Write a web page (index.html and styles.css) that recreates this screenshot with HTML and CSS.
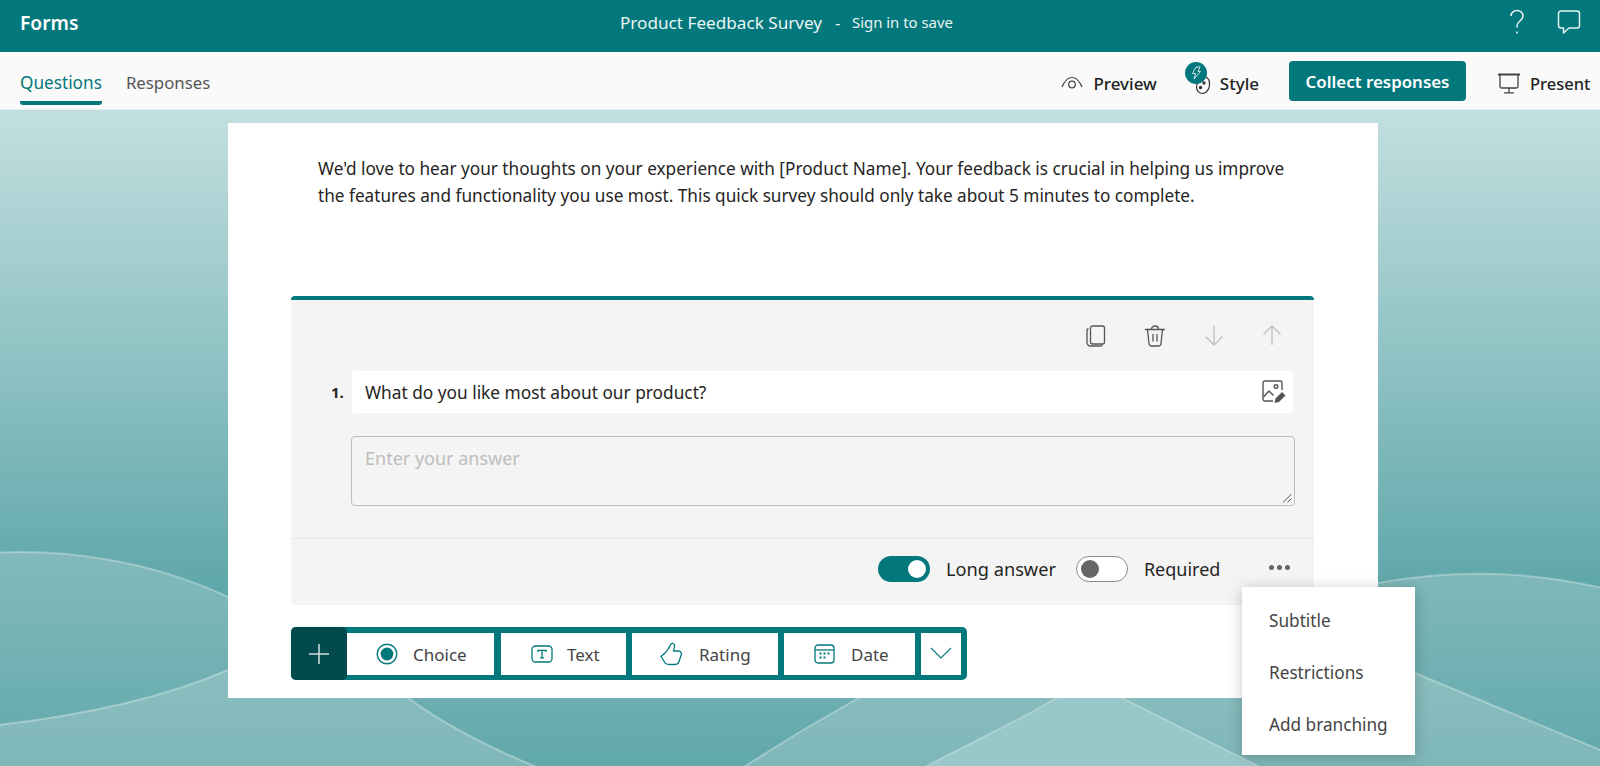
FILE: index.html
```html
<!DOCTYPE html>
<html lang="en">
<head>
<meta charset="utf-8">
<title>Product Feedback Survey</title>
<link rel="stylesheet" href="styles.css">
</head>
<body>
<header class="topbar">
  <div class="brand">Forms</div>
  <div class="doc-title"><span class="doc-name">Product Feedback Survey</span><span class="doc-sep">-</span><span class="doc-save">Sign in to save</span></div>
  <div class="top-icons">
    <svg class="help" width="16" height="26" viewBox="0 0 16 26" fill="none" stroke="#e6f2f2" stroke-width="1.5"><path d="M2 7c0-3 2.500-5.500 6-5.500s6 2.500 6 5.500c0 4.500-6 5-6 10v1.500"/><circle cx="8" cy="23.500" r="1" fill="#e6f2f2" stroke="none"/></svg>
    <svg width="24" height="26" viewBox="0 0 24 26" fill="none" stroke="#e6f2f2" stroke-width="1.500" stroke-linejoin="round"><path d="M4 2h16a2.500 2.500 0 0 1 2.500 2.500v12a2.500 2.500 0 0 1-2.500 2.500h-8l-5.500 5v-5h-2.500a2.500 2.500 0 0 1-2.500-2.500v-12a2.500 2.500 0 0 1 2.500-2.500z"/></svg>
  </div>
</header>
<nav class="subbar">
  <div class="tabs">
    <div class="tab tab-active">Questions</div>
    <div class="tab tab-plain">Responses</div>
  </div>
  <div class="subactions">
    <div class="action act-preview">
      <svg width="22" height="14" viewBox="0 0 22 14" fill="none" stroke="#444" stroke-width="1.200"><path d="M1 11C4 4 7.500 1.500 11 1.500S18 4 21 11"/><circle cx="11" cy="8.500" r="3.300"/></svg>
      <span>Preview</span>
    </div>
    <div class="action act-style">
      <span class="style-icon">
        <svg class="palette" width="16" height="20" viewBox="0 0 16 20" fill="#fafafa" stroke="#333" stroke-width="1.200"><path d="M10 1.500c3.500 1.500 5 5 4.500 9-.6 4.500-3.500 8-7 8s-6-3-6-6.500 3.500-9 8.500-10.500z"/><circle cx="9" cy="8" r="1.100" fill="#333"/><circle cx="5.500" cy="12.500" r="1.100" fill="#333"/></svg>
        <span class="badge"><svg width="12" height="14" viewBox="0 0 12 14" fill="none" stroke="#cfe6e6" stroke-width="1"><path d="M6 1h4L8 5.500h2.500L4 13l1.500-5.500H2.500z"/></svg></span>
      </span>
      <span>Style</span>
    </div>
    <button class="collect">Collect responses</button>
    <div class="action act-present">
      <svg width="24" height="21" viewBox="0 0 24 21" fill="none" stroke="#444" stroke-width="1.300"><path d="M1 1.500h22" stroke-width="2"/><path d="M3 2v11.500a1.500 1.500 0 0 0 1.500 1.500h15a1.500 1.500 0 0 0 1.500-1.500V2M12 15v4.500M7 19.800h10"/></svg>
      <span>Present</span>
    </div>
  </div>
</nav>
<main class="stage">
  <svg class="backdrop" viewBox="0 110 1600 656" preserveAspectRatio="none" aria-hidden="true">
    <defs>
      <linearGradient id="waveFill" gradientUnits="userSpaceOnUse" x1="0" y1="550" x2="0" y2="760"><stop offset="0" stop-color="#84babc"/><stop offset="1" stop-color="#62a9ac"/></linearGradient>
      <linearGradient id="hillFill" gradientUnits="userSpaceOnUse" x1="0" y1="650" x2="0" y2="766"><stop offset="0" stop-color="#8dbfc0"/><stop offset="1" stop-color="#7fb7b9"/></linearGradient>
    </defs>
    <path class="wave" d="M-10 553C60 548 150 560 228 597C500 720 1100 640 1378 583C1450 570 1530 570 1610 590V780H-10Z"/>
    <path class="hill" d="M-10 726C90 715 170 695 228 670C290 645 350 650 407 697C440 722 490 748 539 768V780H-10Z"/>
    <path class="hill" d="M742 768L798 733L860 697C950 600 1200 560 1415 673L1610 754V780H742Z"/>
    <path class="peak" d="M923 768C980 738 1020 720 1058 697L1090 678L1120 697C1160 717 1210 742 1262 768V780H923Z"/>
  </svg>
  <section class="sheet">
    <p class="intro">We'd love to hear your thoughts on your experience with [Product Name]. Your feedback is crucial in helping us improve the features and functionality you use most. This quick survey should only take about 5 minutes to complete.</p>
    <div class="qcard">
      <div class="qtools">
        <svg width="20" height="22" viewBox="0 0 20 22" fill="none" stroke="#555" stroke-width="1.300"><rect x="4.500" y="1" width="14" height="18" rx="2"/><path d="M2.500 3.500A2 2 0 0 0 1 5.500v12A3.500 3.500 0 0 0 4.500 21h10a2 2 0 0 0 1.800-1.300"/></svg>
        <svg width="22" height="22" viewBox="0 0 22 22" fill="none" stroke="#555" stroke-width="1.300"><path d="M1 4.500h20M7.500 4.500C7.500 2.500 9 1 11 1s3.500 1.500 3.500 3.500M3.500 4.500l1.500 14a2.500 2.500 0 0 0 2.500 2.500h7a2.500 2.500 0 0 0 2.500-2.500l1.500-14M9 9v7.500M13 9v7.500"/></svg>
        <svg class="arrow" width="20" height="21" viewBox="0 0 20 21" fill="none" stroke="#c4c4c4" stroke-width="1.500"><path d="M10 1v19M1.500 11.500l8.500 8.500 8.500-8.500"/></svg>
        <svg class="arrow" width="20" height="21" viewBox="0 0 20 21" fill="none" stroke="#c4c4c4" stroke-width="1.500"><path d="M10 20V1M1.500 9.500L10 1l8.500 8.500"/></svg>
      </div>
      <div class="qrow">
        <span class="qnum">1.</span>
        <div class="qtitle">
          <span>What do you like most about our product?</span>
          <svg width="24" height="24" viewBox="0 0 24 24" fill="none" stroke="#555" stroke-width="1.400"><path d="M11 21H3a2 2 0 0 1-2-2V3a2 2 0 0 1 2-2h15a2 2 0 0 1 2 2v7"/><path d="M1.500 17L7 11l4.500 4.500"/><circle cx="14" cy="6.500" r="1.800"/><path d="M12.500 23l1-4.500 6.500-6.500 3.500 3.500-6.500 6.500z" fill="#555" stroke="none"/></svg>
        </div>
      </div>
      <div class="answer">
        <span>Enter your answer</span>
        <svg class="grip" width="10" height="10" viewBox="0 0 10 10" stroke="#555" stroke-width="1"><path d="M1 9.500L9.500 1M5.500 9.500L9.500 5.500"/></svg>
      </div>
      <div class="qfoot">
        <span class="switch switch-on"><i></i></span>
        <span class="switch-label label-long">Long answer</span>
        <span class="switch switch-off"><i></i></span>
        <span class="switch-label label-req">Required</span>
        <span class="dots"><i></i><i></i><i></i></span>
      </div>
    </div>
    <div class="addbar">
      <div class="add-plus"><svg width="22" height="22" viewBox="0 0 22 22" stroke="#d5dfdf" stroke-width="1.500"><path d="M11 1v20M1 11h20"/></svg></div>
      <div class="add-item item-choice">
        <svg width="22" height="22" viewBox="0 0 22 22"><circle cx="11" cy="11" r="9.800" fill="none" stroke="#03787c" stroke-width="1.400"/><circle cx="11" cy="11" r="6.400" fill="#03787c"/></svg>
        <span>Choice</span>
      </div>
      <div class="add-item item-text">
        <svg width="22" height="18" viewBox="0 0 22 18" fill="none" stroke="#03787c" stroke-width="1.300"><rect x="1" y="1" width="20" height="16" rx="3.500"/><path d="M7 7V5.300h8V7M11 5.300v7.500M9 12.800h4"/></svg>
        <span>Text</span>
      </div>
      <div class="add-item item-rating">
        <svg width="23" height="24" viewBox="0 0 23 24" fill="none" stroke="#03787c" stroke-width="1.300" stroke-linejoin="round"><path d="M1 14.500L5 11C7 9 8 7 9.500 5L10.500 2.500C11 .8 14 .8 14.500 3C15 5 13.500 8 13.500 9H18.500C21 9 22 11.500 21 13.500L19 19.500C18.300 21.500 17 22.500 15 22.500H9.500C8 22.500 6.500 22 5.500 21.500Z"/></svg>
        <span>Rating</span>
      </div>
      <div class="add-item item-date">
        <svg width="21" height="20" viewBox="0 0 21 20" fill="none" stroke="#03787c" stroke-width="1.300"><rect x="1" y="1" width="19" height="18" rx="3"/><path d="M1 6h19"/><path d="M5.500 9.500h2M9.500 9.500h2M13.500 9.500h2M5.500 13.500h2M9.500 13.500h2" stroke-width="2"/></svg>
        <span>Date</span>
      </div>
      <div class="add-more"><svg width="22" height="12" viewBox="0 0 22 12" fill="none" stroke="#03787c" stroke-width="1.100"><path d="M1 1l10 10L21 1"/></svg></div>
    </div>
  </section>
  <div class="popup">
    <div class="popup-item">Subtitle</div>
    <div class="popup-item">Restrictions</div>
    <div class="popup-item">Add branching</div>
  </div>
</main>
</body>
</html>
```
FILE: styles.css
```css
* { box-sizing: border-box; }
html, body { margin: 0; height: 766px; overflow: hidden; }
body { display: flex; flex-direction: column; width: 1600px; font-family: "Noto Sans", "Open Sans", sans-serif; color: #252423; }

.topbar { height: 52px; background: #03787c; color: #fff; display: flex; align-items: center; padding: 0 19px 0 20px; position: relative; flex: none; }
.brand { font-size: 19.2px; font-weight: 600; width: 600px; margin-top: -8px; }
.doc-title { display: flex; align-items: center; font-size: 17.15px; color: #eaf4f4; margin-top: -8px; }
.doc-name { width: 215px; }
.doc-sep { width: 17px; }
.doc-save { font-size: 14.9px; }
.top-icons { margin-left: auto; display: flex; align-items: center; gap: 32px; margin-top: -8px; }

.subbar { height: 58px; background: #fafafa; display: flex; justify-content: space-between; padding-left: 20px; flex: none; border-bottom: 1px solid #e4eeee; }
.tabs { display: flex; gap: 24px; }
.tab { height: 53px; padding-top: 19px; color: #555; }
.tab-active { font-size: 17.2px; color: #03787c; border-bottom: 4px solid #03787c; border-radius: 0 0 3px 3px; }
.tab-plain { font-size: 16.8px; }
.subactions { display: flex; align-items: flex-start; white-space: nowrap; font-size: 17px; }
.action { display: flex; align-items: center; height: 58px; color: #222; font-weight: 500; padding-top: 4px; }
.act-preview { gap: 10px; margin-right: 28px; }
.act-style { gap: 13px; margin-right: 30px; }
.act-present { gap: 9px; margin-left: 31px; width: 103px; font-size: 16.5px; }
.style-icon { position: relative; display: block; width: 22px; height: 24px; }
.palette { position: absolute; left: 10px; top: 4px; }
.badge { position: absolute; left: 0; top: -9px; width: 22px; height: 22px; border-radius: 50%; background: #03787c; display: flex; align-items: center; justify-content: center; }
.collect { margin-top: 9px; width: 177px; height: 40px; border: 0; border-radius: 4px; background: #03787c; color: #fff; font: 600 16.9px "Noto Sans", sans-serif; padding: 1px 0 0; }

.stage { position: relative; flex: 1; background: linear-gradient(180deg, #c3dfe0 0, #5fa7aa 480px); padding: 13px 0 0 228px; }
.backdrop { position: absolute; inset: 0; width: 100%; height: 100%; }
.wave { fill: url(#waveFill); stroke: rgba(255,255,255,.3); stroke-width: 2; }
.hill { fill: url(#hillFill); stroke: rgba(255,255,255,.3); stroke-width: 2; }
.peak { fill: #9ac8ca; stroke: rgba(255,255,255,.25); stroke-width: 2; }

.sheet { position: relative; width: 1150px; height: 575px; background: #fff; padding: 33px 0 0 63px; }
.intro { margin: 0 0 0 27px; width: 990px; font-size: 17.2px; line-height: 26.5px; height: 140px; color: #252423; }

.qcard { width: 1023px; height: 309px; background: #f4f4f4; border-top: 4px solid #03787c; border-radius: 4px; display: flex; flex-direction: column; }
.qtools { display: flex; justify-content: flex-end; align-items: center; height: 71px; padding: 0 32px 0 0; gap: 38px; }
.qrow { display: flex; align-items: center; height: 42px; padding-left: 40px; }
.qnum { width: 21px; font-size: 15px; font-weight: 700; }
.qtitle { width: 941px; height: 42px; background: #fff; border-radius: 4px; display: flex; justify-content: space-between; align-items: center; padding: 0 7px 0 13px; font-size: 17.3px; }
.answer { margin: 23px 0 0 60px; width: 944px; height: 70px; border: 1px solid #bdbdbd; border-radius: 4px; padding: 9px 13px; font-size: 18px; color: #bdbdbd; position: relative; }
.grip { position: absolute; right: 2px; bottom: 2px; }
.qfoot { margin-top: 32px; border-top: 1px solid #e6e6e6; height: 66px; display: flex; align-items: center; padding: 0 0 5px 587px; font-size: 18px; }
.switch { width: 52px; height: 26px; border-radius: 13px; display: flex; align-items: center; padding: 0 4px; }
.switch i { display: block; width: 18px; height: 18px; border-radius: 50%; }
.switch-on { background: #03787c; justify-content: flex-end; }
.switch-on i { background: #fff; }
.switch-off { background: #fff; border: 1px solid #8a8a8a; margin-left: 20px; }
.switch-off i { background: #666; }
.switch-label { color: #252423; }
.label-long { margin-left: 16px; font-size: 18.2px; }
.label-req { margin-left: 16px; }
.dots { display: flex; gap: 3px; margin-left: 49px; margin-top: -3px; }
.dots i { width: 5px; height: 5px; border-radius: 50%; background: #666; }

.addbar { margin: 22px 0 0 0; width: 676px; height: 53px; background: #03787c; border-radius: 5px; display: flex; padding: 6px 6px 5px 0; align-items: stretch; position: relative; font-size: 17px; color: #444; }
.add-plus { width: 56px; height: 53px; margin-top: -6px; background: #024a4d; border-radius: 5px; display: flex; align-items: center; justify-content: center; }
.add-item { background: #fff; display: flex; align-items: center; margin-right: 6px; }
.item-choice { width: 147px; gap: 15px; padding-left: 29px; margin-right: 7px; }
.item-text { width: 125px; gap: 14px; padding-left: 30px; }
.item-rating { width: 146px; gap: 16px; padding-left: 28px; }
.item-date { width: 131px; gap: 16px; padding-left: 30px; }
.add-more { width: 40px; background: #fff; display: flex; justify-content: center; padding-top: 14px; }

.popup { position: absolute; left: 1242px; top: 477px; width: 173px; height: 168px; background: #fff; box-shadow: 0 2px 14px rgba(0,0,0,.22); padding-top: 7px; font-size: 17.2px; color: #444; }
.popup-item { height: 52px; display: flex; align-items: center; padding-left: 27px; }
```
